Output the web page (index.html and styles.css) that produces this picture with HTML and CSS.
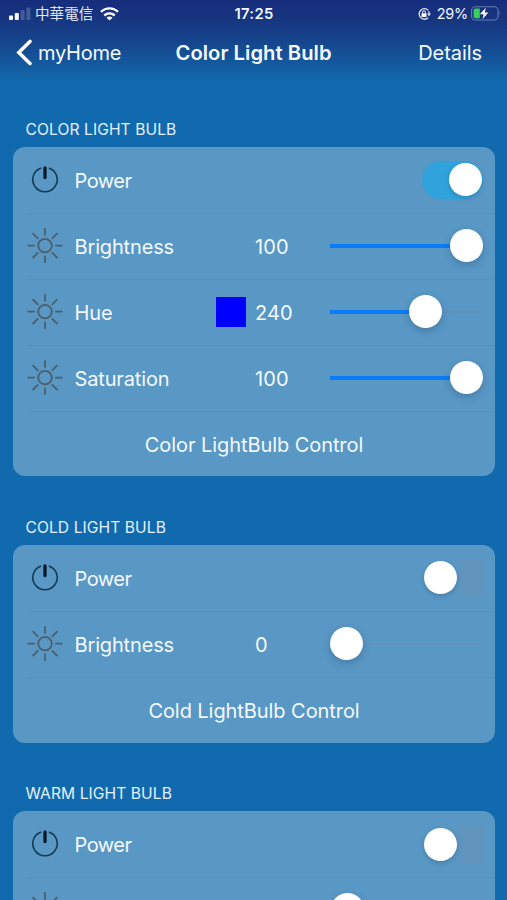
FILE: index.html
```html
<!DOCTYPE html>
<html lang="en">
<head>
<meta charset="utf-8">
<title>Color Light Bulb</title>
<link rel="stylesheet" href="styles.css">
</head>
<body>
<svg class="defs" width="0" height="0" aria-hidden="true">
  <symbol id="power" viewBox="0 0 36 36">
    <path d="M14.2 5.9A12.2 12.2 0 1 0 21.8 5.9" fill="none" stroke="#153b53" stroke-width="1.6"/>
    <path d="M18 5.8V15.6" stroke="#061825" stroke-width="3.2" stroke-linecap="round"/>
  </symbol>
  <symbol id="sun" viewBox="0 0 36 36">
    <g fill="none" stroke="#4b5f6b" stroke-width="1.8" stroke-linecap="round">
      <circle cx="18" cy="17.6" r="6.8"/>
      <path d="M18 1V6.9M18 28.3V34.2M1.2 17.6H7.1M28.9 17.6H34.8M6.1 5.7L10.7 10.3M25.3 24.9L29.9 29.5M6.1 29.5L10.7 24.9M25.3 10.3L29.9 5.7"/>
    </g>
  </symbol>
</svg>

<header class="top">
  <div class="status">
    <div class="carrier">
      <svg width="22" height="14" viewBox="0 0 22 14"><rect x="0" y="8.5" width="4" height="4.5" rx="1" fill="#fff"/><rect x="5.8" y="6" width="4" height="7" rx="1" fill="#fff"/><rect x="11.6" y="3" width="4" height="10" rx="1" fill="#fff" opacity=".2"/><rect x="17.4" y=".5" width="4" height="12.5" rx="1" fill="#fff" opacity=".2"/></svg>
      <span class="carrier-name">中華電信</span>
      <svg width="19" height="14" viewBox="0 0 19 14"><g fill="none" stroke="#fff" stroke-width="2.4"><path d="M1 4.9C5.8.2 13.2.2 18 4.9"/><path d="M4.3 8.5C7.3 5.7 11.7 5.7 14.7 8.5"/></g><path d="M6.5 10.7Q9.5 8.2 12.5 10.7L9.5 13.6Z" fill="#fff"/></svg>
    </div>
    <span class="time">17:25</span>
    <div class="power-info">
      <svg width="14" height="14" viewBox="0 0 14 14"><path d="M11.2 3.2A5.3 5.3 0 1 0 11.1 10.8M11.6 4.2Q12.2 5.4 12.1 6.6" fill="none" stroke="#e4e8f5" stroke-width="1.3"/><path d="M10 6.6H14L12 9.3Z" fill="#e4e8f5"/><rect x="4.5" y="6.3" width="5" height="3.8" rx=".6" fill="#fff"/><path d="M5.5 6.5V5.3A1.5 1.5 0 0 1 8.5 5.3V6.5" fill="none" stroke="#fff"/></svg>
      <span class="percent">29%</span>
      <svg width="30" height="15" viewBox="0 0 30 15"><rect x=".6" y=".8" width="26.4" height="13.2" rx="3.8" fill="none" stroke="#667fb3" stroke-width="1.1"/><path d="M28.2 5.2Q29.9 7.4 28.2 9.6Z" fill="#667fb3"/><path d="M4.4 2.6H8.8V12.2H4.4Q2.6 12.2 2.6 10.2V4.6Q2.6 2.6 4.4 2.6Z" fill="#35d158"/><path d="M14.8 1.8L8.8 8.3H12.6L11.6 13L17.4 6.5H13.8Z" fill="#fff"/></svg>
    </div>
  </div>
  <nav class="nav">
    <a class="back"><svg width="17" height="27" viewBox="0 0 17 27"><path d="M15 2.4L3.8 13.4L15 24.4" fill="none" stroke="#fff" stroke-width="3.5" stroke-linecap="round" stroke-linejoin="miter"/></svg><span>myHome</span></a>
    <h1>Color Light Bulb</h1>
    <a class="details">Details</a>
  </nav>
</header>

<main>
  <section>
    <h2>COLOR LIGHT BULB</h2>
    <div class="card">
      <div class="row"><svg class="icon"><use href="#power"/></svg><span class="label power">Power</span><span class="switch on"><i></i></span></div>
      <div class="row"><svg class="icon"><use href="#sun"/></svg><span class="label">Brightness</span><span class="value">100</span><span class="slider full"><i></i></span></div>
      <div class="row"><svg class="icon"><use href="#sun"/></svg><span class="label">Hue</span><span class="swatch"></span><span class="value">240</span><span class="slider part"><i></i></span></div>
      <div class="row"><svg class="icon"><use href="#sun"/></svg><span class="label">Saturation</span><span class="value">100</span><span class="slider full"><i></i></span></div>
      <div class="row action"><span>Color LightBulb Control</span></div>
    </div>
  </section>
  <section>
    <h2>COLD LIGHT BULB</h2>
    <div class="card">
      <div class="row"><svg class="icon"><use href="#power"/></svg><span class="label power">Power</span><span class="switch"><i></i></span></div>
      <div class="row"><svg class="icon"><use href="#sun"/></svg><span class="label">Brightness</span><span class="value">0</span><span class="slider"><i></i></span></div>
      <div class="row action"><span>Cold LightBulb Control</span></div>
    </div>
  </section>
  <section class="last">
    <h2>WARM LIGHT BULB</h2>
    <div class="card">
      <div class="row"><svg class="icon"><use href="#power"/></svg><span class="label power">Power</span><span class="switch"><i></i></span></div>
      <div class="row peek"><svg class="icon"><use href="#sun"/></svg><span class="slider"><i></i></span></div>
    </div>
  </section>
</main>
</body>
</html>
```

FILE: styles.css
```css
* { box-sizing: border-box; }
body {
  margin: 0;
  height: 900px;
  overflow: hidden;
  display: flex;
  flex-direction: column;
  background: #126aae;
  color: #f4faff;
  font-family: Inter, "Noto Sans CJK TC", sans-serif;
  font-size: 20px;
}
.defs { display: block; position: absolute; }
.top {
  height: 92px;
  flex: none;
  background: linear-gradient(#162d7b 0, #17347f 18px, #15488f 45px, #135a9f 65px, #126aae 82px);
}
.status {
  height: 27px;
  padding: 0 6px 0 9px;
  display: grid;
  grid-template-columns: 1fr auto 1fr;
  align-items: center;
}
.status svg { display: block; }
.carrier { display: flex; align-items: center; }
.carrier-name { margin: 0 7px 0 4px; font-size: 14.6px; line-height: 20px; color: #dfe6f6; }
.time { margin-right: 2px; font-size: 14.8px; font-weight: 600; letter-spacing: .3px; }
.power-info { display: flex; justify-content: flex-end; align-items: center; }
.percent { margin: 0 3px 0 6px; font-size: 14.4px; letter-spacing: -.2px; }
.nav {
  height: 51px;
  padding: 0 25px 0 15px;
  display: grid;
  grid-template-columns: 1fr auto 1fr;
  align-items: center;
}
.back { display: flex; align-items: center; gap: 6px; letter-spacing: -.25px; }
.nav h1 { margin: 0 0 0 10px; font-size: 20.2px; font-weight: 600; letter-spacing: .05px; }
.details { text-align: right; letter-spacing: -.05px; }
section { margin-bottom: 34.5px; }
h2 {
  margin: 0;
  height: 34px;
  padding: 8px 0 0 25.5px;
  font-size: 15.6px;
  line-height: 18px;
  font-weight: 400;
  letter-spacing: .08px;
  color: #e4f1fc;
}
main { padding-top: 21px; flex: 1; min-height: 0; overflow: hidden; }
.card {
  margin: 0 12.5px 0 13px;
  border-radius: 12px;
  background: #5997c4;
}
.last { margin-bottom: 0; }
.last .card { height: 89px; overflow: hidden; border-radius: 12px 12px 0 0; }
.row {
  height: 65.9px;
  padding: 0 11.5px 0 14px;
  display: flex;
  align-items: center;
}
.row + .row { background: linear-gradient(#5493c1, #5493c1) 14px 0 / 100% 1px no-repeat; }
.icon { width: 36px; height: 36px; flex: none; }
.label { width: 180.5px; margin-left: 11.5px; letter-spacing: -.15px; }
.label, .value, .action span { padding-top: 2px; }
.power { letter-spacing: -.5px; }
.value { width: 75px; letter-spacing: .1px; }
.swatch { width: 30px; height: 30px; margin: 0 9.5px 0 -39.5px; background: #0000fe; }
.switch {
  width: 61px;
  height: 38px;
  padding: 2.5px 1px 2.5px 2px;
  margin-left: auto;
  display: flex;
  border-radius: 19px 5px 5px 19px;
  background: linear-gradient(90deg, #5997c4 45%, #6094bd 75%);
}
.switch.on { border-radius: 19px; background: #30a3dc; justify-content: flex-end; }
i { width: 33px; height: 33px; flex: none; border-radius: 50%; background: #fff; box-shadow: 0 3px 7px rgba(20, 55, 95, .28); }
.switch i { box-shadow: 0 2px 4px rgba(20, 55, 95, .24); }
.slider {
  width: 152.5px;
  height: 33px;
  display: flex;
  background: linear-gradient(#5f93b9, #5f93b9) 0 16px / 100% 2px no-repeat;
}
.slider.full { justify-content: flex-end; background: linear-gradient(#087bf5, #087bf5) 0 15px / 130px 4px no-repeat; }
.slider.part { padding-left: 79px; background: linear-gradient(#087bf5, #087bf5) 0 15px / 90px 4px no-repeat, linear-gradient(#5f93b9, #5f93b9) 0 16px / 100% 2px no-repeat; }
.peek .slider { margin-left: auto; }
.action { justify-content: center; letter-spacing: -.07px; }
.action span { margin-right: 2px; }
```
